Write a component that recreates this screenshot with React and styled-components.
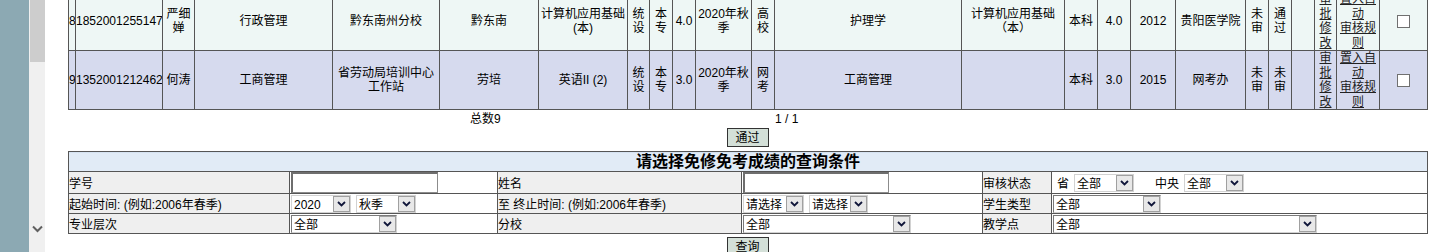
import React from "react";
import styled, { createGlobalStyle } from "styled-components";

const GlobalStyle = createGlobalStyle`
  html, body {
    margin: 0;
    padding: 0;
    background: #fff;
  }
  body {
    font-family: "Liberation Sans", "Noto Sans CJK SC", sans-serif;
    font-size: 12px;
    color: #000;
  }
`;

const Page = styled.div`
  display: flex;
  height: 252px;
  overflow: hidden;
`;

const SideFrame = styled.div`
  flex: 0 0 29px;
  background: #8ca9b3;
`;

const ScrollTrack = styled.div`
  flex: 0 0 16px;
  display: flex;
  flex-direction: column;
  align-items: flex-end;
  background: #f0f0f0;
`;

const ScrollThumb = styled.div`
  width: 15px;
  height: 62px;
  background: #cdcdcd;
`;

const ScrollArrow = styled.svg`
  align-self: center;
  margin-top: auto;
  margin-bottom: 19px;
`;

const Main = styled.div`
  flex: 1;
  padding: 0 21px 0 23px;
  overflow: hidden;
`;

/* page is scrolled a little, so the first row is cut at the top */
const Content = styled.div`
  width: 1359px;
  margin-top: -9px;
`;

const DataTable = styled.table`
  width: 1359px;
  table-layout: fixed;
  border-collapse: collapse;
`;

const DataRow = styled.tr`
  background: ${(p) => (p.$alt ? "#d6daee" : "#eef7f5")};
`;

const DataCell = styled.td`
  border: 1px solid #555;
  padding: 0;
  height: 58px;
  text-align: center;
  vertical-align: middle;
  line-height: 14.5px;
  white-space: ${(p) => (p.$nowrap ? "nowrap" : "normal")};
  overflow: hidden;
`;

const RuleLink = styled.a`
  color: #222;
  text-decoration: underline;
  cursor: pointer;
`;

const CheckBox = styled.span`
  display: inline-block;
  width: 13px;
  height: 13px;
  box-sizing: border-box;
  border: 1px solid #707070;
  background: #fff;
  vertical-align: middle;
`;

const Pager = styled.div`
  display: flex;
  height: 18px;
  line-height: 18px;
  padding-left: 402px;
`;

const PagerTotal = styled.span`
  width: 305px;
`;

const ActionButton = styled.button`
  display: block;
  margin: 0 auto;
  width: 42px;
  height: 19px;
  padding: 0;
  box-sizing: border-box;
  border: 1px solid #333;
  background: #d4e0d8;
  font: inherit;
  line-height: 16px;
  color: #000;
`;

const FormTable = styled.table`
  width: 1359px;
  table-layout: fixed;
  border-collapse: collapse;
  margin: 4px 0 3px;
`;

const TitleCell = styled.td`
  border: 1px solid #555;
  padding: 0;
  height: 19px;
  text-align: center;
  font-size: 16px;
  font-weight: bold;
  line-height: 19px;
  background: repeating-linear-gradient(
    to bottom,
    #d5e2f1 0,
    #d5e2f1 1px,
    #edf3fa 1px,
    #edf3fa 2px
  );
`;

const FormRow = styled.tr`
  height: ${(p) => p.$h}px;
`;

const LabelCell = styled.td`
  border: 1px solid #555;
  padding: 0;
  background: #efefef;
  text-align: left;
  vertical-align: middle;
  white-space: nowrap;
`;

const ValueCell = styled.td`
  border: 1px solid #555;
  padding: 0;
  background: #fff;
  vertical-align: middle;
  white-space: nowrap;
`;

const FieldGroup = styled.div`
  display: flex;
  align-items: center;
  gap: ${(p) => p.$gap || 5}px;
  padding-left: ${(p) => p.$pad || 1}px;
`;

const FieldLabel = styled.span`
  margin-left: ${(p) => p.$ml || 0}px;
`;

const TextInput = styled.div`
  width: ${(p) => p.$w}px;
  height: 21px;
  box-sizing: border-box;
  border-style: solid;
  border-width: 2px 1px 1px 2px;
  border-color: #6e6e6e #8c8c8c #8c8c8c #6e6e6e;
  background: #fff;
`;

const SelectBox = styled.div`
  display: flex;
  width: ${(p) => p.$w}px;
  height: 18px;
  box-sizing: border-box;
  border: 1px solid #d2d2d2;
  border-top-color: ${(p) => (p.$deep ? "#7a7a7a" : "#d2d2d2")};
  border-left-color: ${(p) => (p.$deep ? "#7a7a7a" : "#d2d2d2")};
  background: #fff;
`;

const SelectText = styled.span`
  flex: 1;
  padding: 1px 0 0 2px;
  line-height: 16px;
  overflow: hidden;
`;

const SelectButton = styled.span`
  display: flex;
  align-items: center;
  justify-content: center;
  width: 17px;
  box-sizing: border-box;
  border: 1px solid #a0a0a0;
  background: #e8e8e8;
`;

const Chevron = () => (
  <svg width="9" height="6" viewBox="0 0 9 6">
    <path d="M1 1 L4.5 4.5 L8 1" fill="none" stroke="#10163a" strokeWidth="1.8" />
  </svg>
);

const Select = ({ w, value, deep }) => (
  <SelectBox $w={w} $deep={deep}>
    <SelectText>{value}</SelectText>
    <SelectButton>
      <Chevron />
    </SelectButton>
  </SelectBox>
);

const COLS = [7, 87, 32, 138, 107, 99, 89, 22, 23, 23, 56, 23, 187, 103, 33, 33, 45, 70, 23, 23, 23, 22, 43, 48];

const ROWS = [
  {
    no: "8", id: "1852001255147", name: "严细婵", major: "行政管理", branch: "黔东南州分校",
    point: "黔东南", course: "计算机应用基础(本)", kind: "统设", level: "本专", credit: "4.0",
    term: "2020年秋季", src: "高校", oldMajor: "护理学", oldCourse: "计算机应用基础（本）",
    oldLevel: "本科", oldCredit: "4.0", year: "2012", school: "贵阳医学院",
    prov: "未审", center: "通过",
  },
  {
    no: "9", id: "1352001212462", name: "何涛", major: "工商管理", branch: "省劳动局培训中心工作站",
    point: "劳培", course: "英语II (2)", kind: "统设", level: "本专", credit: "3.0",
    term: "2020年秋季", src: "网考", oldMajor: "工商管理", oldCourse: "",
    oldLevel: "本科", oldCredit: "3.0", year: "2015", school: "网考办",
    prov: "未审", center: "未审",
  },
];

const FORM_COLS = [221, 208, 244, 241, 69, 376];

export default function App() {
  return (
    <>
      <GlobalStyle />
      <Page>
        <SideFrame />
        <ScrollTrack>
          <ScrollThumb />
          <ScrollArrow width="11" height="8" viewBox="0 0 11 8">
            <path d="M1 1.5 L5.5 6 L10 1.5" fill="none" stroke="#606060" strokeWidth="2" />
          </ScrollArrow>
        </ScrollTrack>
        <Main>
          <Content>
            <DataTable>
              <colgroup>
                {COLS.map((w, i) => (
                  <col key={i} style={{ width: w }} />
                ))}
              </colgroup>
              <tbody>
                {ROWS.map((r, i) => (
                  <DataRow key={r.id} $alt={i % 2 === 1}>
                    <DataCell $nowrap>{r.no}</DataCell>
                    <DataCell $nowrap>{r.id}</DataCell>
                    <DataCell>{r.name}</DataCell>
                    <DataCell>{r.major}</DataCell>
                    <DataCell>{r.branch}</DataCell>
                    <DataCell>{r.point}</DataCell>
                    <DataCell>{r.course}</DataCell>
                    <DataCell>{r.kind}</DataCell>
                    <DataCell>{r.level}</DataCell>
                    <DataCell $nowrap>{r.credit}</DataCell>
                    <DataCell>{r.term}</DataCell>
                    <DataCell>{r.src}</DataCell>
                    <DataCell>{r.oldMajor}</DataCell>
                    <DataCell>{r.oldCourse}</DataCell>
                    <DataCell>{r.oldLevel}</DataCell>
                    <DataCell $nowrap>{r.oldCredit}</DataCell>
                    <DataCell $nowrap>{r.year}</DataCell>
                    <DataCell>{r.school}</DataCell>
                    <DataCell>{r.prov}</DataCell>
                    <DataCell>{r.center}</DataCell>
                    <DataCell />
                    <DataCell>
                      <RuleLink>审批修改</RuleLink>
                    </DataCell>
                    <DataCell>
                      <RuleLink>置入自动</RuleLink>
                      <br />
                      <RuleLink>审核规则</RuleLink>
                    </DataCell>
                    <DataCell>
                      <CheckBox />
                    </DataCell>
                  </DataRow>
                ))}
              </tbody>
            </DataTable>

            <Pager>
              <PagerTotal>总数9</PagerTotal>
              <span>1 / 1</span>
            </Pager>
            <ActionButton>通过</ActionButton>

            <FormTable>
              <colgroup>
                {FORM_COLS.map((w, i) => (
                  <col key={i} style={{ width: w }} />
                ))}
              </colgroup>
              <tbody>
                <tr>
                  <TitleCell colSpan={6}>请选择免修免考成绩的查询条件</TitleCell>
                </tr>
                <FormRow $h={22}>
                  <LabelCell>学号</LabelCell>
                  <ValueCell>
                    <FieldGroup>
                      <TextInput $w={147} />
                    </FieldGroup>
                  </ValueCell>
                  <LabelCell>姓名</LabelCell>
                  <ValueCell>
                    <FieldGroup>
                      <TextInput $w={146} />
                    </FieldGroup>
                  </ValueCell>
                  <LabelCell>审核状态</LabelCell>
                  <ValueCell>
                    <FieldGroup $gap={0} $pad={5}>
                      <FieldLabel>省</FieldLabel>
                      <Select w={60} value="全部" />
                      <FieldLabel $ml={16}>中央</FieldLabel>
                      <Select w={60} value="全部" />
                    </FieldGroup>
                  </ValueCell>
                </FormRow>
                <FormRow $h={20}>
                  <LabelCell>起始时间: (例如:2006年春季)</LabelCell>
                  <ValueCell>
                    <FieldGroup>
                      <Select w={60} value="2020" />
                      <Select w={60} value="秋季" />
                    </FieldGroup>
                  </ValueCell>
                  <LabelCell>至 终止时间: (例如:2006年春季)</LabelCell>
                  <ValueCell>
                    <FieldGroup>
                      <Select w={61} value="请选择" />
                      <Select w={59} value="请选择" />
                    </FieldGroup>
                  </ValueCell>
                  <LabelCell>学生类型</LabelCell>
                  <ValueCell>
                    <FieldGroup>
                      <Select w={108} value="全部" deep />
                    </FieldGroup>
                  </ValueCell>
                </FormRow>
                <FormRow $h={20}>
                  <LabelCell>专业层次</LabelCell>
                  <ValueCell>
                    <FieldGroup>
                      <Select w={106} value="全部" deep />
                    </FieldGroup>
                  </ValueCell>
                  <LabelCell>分校</LabelCell>
                  <ValueCell>
                    <FieldGroup>
                      <Select w={168} value="全部" deep />
                    </FieldGroup>
                  </ValueCell>
                  <LabelCell>教学点</LabelCell>
                  <ValueCell>
                    <FieldGroup>
                      <Select w={264} value="全部" deep />
                    </FieldGroup>
                  </ValueCell>
                </FormRow>
              </tbody>
            </FormTable>
            <ActionButton>查询</ActionButton>
          </Content>
        </Main>
      </Page>
    </>
  );
}
